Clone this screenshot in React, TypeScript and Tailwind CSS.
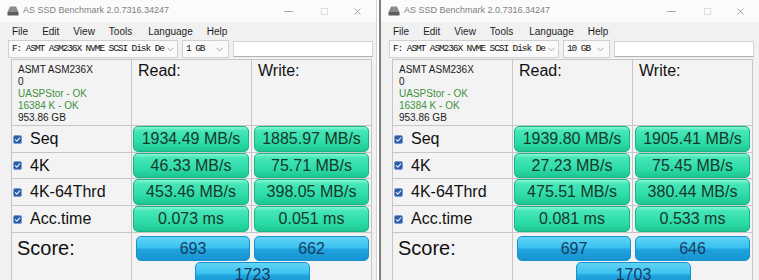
import React from "react";

type Data = {
  size: string;
  rows: { label: string; r: string; w: string; h: string }[];
  score: [string, string, string];
};

const left: Data = {
  size: "1 GB",
  rows: [
    { label: "Seq", r: "1934.49 MB/s", w: "1885.97 MB/s", h: "h-[26px]" },
    { label: "4K", r: "46.33 MB/s", w: "75.71 MB/s", h: "h-[25px]" },
    { label: "4K-64Thrd", r: "453.46 MB/s", w: "398.05 MB/s", h: "h-[26px]" },
    { label: "Acc.time", r: "0.073 ms", w: "0.051 ms", h: "h-[26px]" },
  ],
  score: ["693", "662", "1723"],
};

const right: Data = {
  size: "10 GB",
  rows: [
    { label: "Seq", r: "1939.80 MB/s", w: "1905.41 MB/s", h: "h-[26px]" },
    { label: "4K", r: "27.23 MB/s", w: "75.45 MB/s", h: "h-[25px]" },
    { label: "4K-64Thrd", r: "475.51 MB/s", w: "380.44 MB/s", h: "h-[26px]" },
    { label: "Acc.time", r: "0.081 ms", w: "0.533 ms", h: "h-[26px]" },
  ],
  score: ["697", "646", "1703"],
};

function Check() {
  return (
    <svg width="9" height="9" viewBox="0 0 9 9" className="shrink-0">
      <rect x="0.5" y="0.5" width="8" height="8" rx="1.6" fill="#2b5ca6" stroke="#7a9cd0" strokeWidth="1" />
      <path d="M2.3 4.6 L3.9 6.1 L6.7 2.9" fill="none" stroke="#e8f0ff" strokeWidth="1.1" strokeLinecap="round" strokeLinejoin="round" />
    </svg>
  );
}

function Chevron() {
  return (
    <svg width="7" height="5" viewBox="0 0 7 5" className="shrink-0">
      <path d="M0.5 0.8 L3.5 3.8 L6.5 0.8" fill="none" stroke="#9a9a9a" strokeWidth="0.9" />
    </svg>
  );
}

function DriveIcon() {
  return (
    <svg width="12" height="10" viewBox="0 0 12 10" className="shrink-0">
      <path d="M3 0.5 L9 0.5 L11.5 6 L0.5 6 Z" fill="#8c8c8c" />
      <rect x="0.5" y="6" width="11" height="3.5" fill="#5c5c5c" />
    </svg>
  );
}

function GreenBar({ v, cls }: { v: string; cls: string }) {
  return (
    <div
      className={`h-full rounded-[5px] border border-[#17b685] bg-[linear-gradient(to_bottom,#8af5d6_0%,#46e6b8_16%,#2edda9_62%,#1cc693_100%)] flex items-center justify-center text-[16px] leading-none text-[#18372a] ${cls}`}
    >
      {v}
    </div>
  );
}

function BlueBar({ v, cls }: { v: string; cls: string }) {
  return (
    <div
      className={`h-[25px] rounded-[5px] border border-[#1a90cc] bg-[linear-gradient(to_bottom,#62d3f6_0%,#3ac2f0_45%,#1fa3de_55%,#1893d1_100%)] flex items-center justify-center text-[16px] leading-none text-[#173b63] ${cls}`}
    >
      {v}
    </div>
  );
}

function Window({ d, w }: { d: Data; w: string }) {
  return (
    <div className={`${w} h-[280px] shrink-0 bg-[#f1f1f1] flex flex-col overflow-hidden font-['Liberation_Sans',Arial,sans-serif]`}>
      {/* title bar */}
      <div className="h-[22px] shrink-0 bg-[#fbfbfb] flex items-center pl-[7px]">
        <DriveIcon />
        <span className="ml-[4px] text-[9px] text-[#808080] whitespace-nowrap">AS SSD Benchmark 2.0.7316.34247</span>
        <div className="ml-auto flex items-center">
          <div className="w-[9px] h-[1px] bg-[#a8a8a8] mr-[28px]" />
          <div className="w-[7px] h-[7px] border border-[#dcdcdc] mr-[26px]" />
          <svg width="7" height="7" viewBox="0 0 7 7" className="mr-[15px]">
            <path d="M0.5 0.5 L6.5 6.5 M6.5 0.5 L0.5 6.5" stroke="#9a9a9a" strokeWidth="0.9" />
          </svg>
        </div>
      </div>
      {/* menu */}
      <div className="h-[18px] shrink-0 flex items-center gap-[14px] pl-[12px] text-[10px] text-[#1e1e1e]">
        <span>File</span>
        <span>Edit</span>
        <span>View</span>
        <span>Tools</span>
        <span className="ml-[2px]">Language</span>
        <span>Help</span>
      </div>
      {/* toolbar */}
      <div className="h-[19px] shrink-0 flex items-start pl-[8px]">
        <div className="w-[170px] h-[18px] border border-[#cfcfcf] bg-[#fafafa] flex items-center pl-[3px] pr-[3px] font-['Liberation_Mono','Courier_New',monospace] text-[9.5px] tracking-[-1.1px] text-[#111]">
          <span className="whitespace-nowrap">F: ASMT ASM236X NVME SCSI Disk De</span>
          <span className="ml-auto"><Chevron /></span>
        </div>
        <div className="ml-[4px] w-[47px] h-[18px] border border-[#cfcfcf] bg-[#fafafa] flex items-center pl-[3px] pr-[5px] font-['Liberation_Mono','Courier_New',monospace] text-[9.5px] tracking-[-1.1px] text-[#111]">
          <span className="whitespace-nowrap">{d.size}</span>
          <span className="ml-auto"><Chevron /></span>
        </div>
        <div className="ml-[4px] mt-[1px] w-[140px] h-[16px] border border-[#d4d4d4] border-b-[#b0b0b0] bg-white" />
      </div>
      {/* panel */}
      <div className="ml-[11px] w-[361px] border-l border-t border-[#c6c6c6] bg-[#f3f3f3]">
        {/* header */}
        <div className="flex h-[66px] border-b border-[#c6c6c6]">
          <div className="w-[120px] border-r border-[#c6c6c6] pl-[6px] pt-[4px] text-[10px] leading-[12px] text-[#1a1a1a]">
            <div>ASMT ASM236X</div>
            <div>0</div>
            <div className="text-[#3f9142]">UASPStor - OK</div>
            <div className="text-[#3f9142]">16384 K - OK</div>
            <div>953.86 GB</div>
          </div>
          <div className="w-[120px] border-r border-[#c6c6c6] pl-[6px] pt-[2px] text-[16px] leading-[18px] text-[#111]">Read:</div>
          <div className="w-[120px] border-r border-[#c6c6c6] pl-[6px] pt-[2px] text-[16px] leading-[18px] text-[#111]">Write:</div>
        </div>
        {d.rows.map((r) => (
          <div key={r.label} className={`flex border-b border-[#c6c6c6] box-content ${r.h}`}>
            <div className="w-[120px] border-r border-[#c6c6c6] flex items-center pl-[1px] gap-[8px] text-[16px] text-[#111]">
              <Check />
              <span>{r.label}</span>
            </div>
            <div className="w-[120px] border-r border-[#c6c6c6] pl-[1px] pr-[2px]">
              <GreenBar v={r.r} cls="w-[116px]" />
            </div>
            <div className="w-[120px] border-r border-[#c6c6c6] pl-[2px] pr-[2px]">
              <GreenBar v={r.w} cls="w-[115px]" />
            </div>
          </div>
        ))}
        {/* score */}
        <div className="flex h-[60px]">
          <div className="w-[120px] border-r border-[#c6c6c6] pl-[5px] pt-[3px] text-[20px] leading-[24px] text-[#111]">Score:</div>
          <div className="w-[240px] border-r border-[#c6c6c6] pt-[3px]">
            <div className="flex">
              <BlueBar v={d.score[0]} cls="ml-[4px] w-[114px]" />
              <BlueBar v={d.score[1]} cls="ml-[4px] w-[115px]" />
            </div>
            <BlueBar v={d.score[2]} cls="ml-[63px] mt-[1px] w-[115px]" />
          </div>
        </div>
      </div>
    </div>
  );
}

export default function App() {
  return (
    <div className="w-[759px] h-[280px] flex overflow-hidden bg-white">
      <Window d={left} w="w-[377px] border-r border-[#d4d4d4]" />
      <div className="w-[2px] h-[280px] bg-white shrink-0" />
      <div className="w-[2px] h-[280px] bg-[#7e7e7e] shrink-0" />
      <Window d={right} w="w-[378px]" />
    </div>
  );
}
